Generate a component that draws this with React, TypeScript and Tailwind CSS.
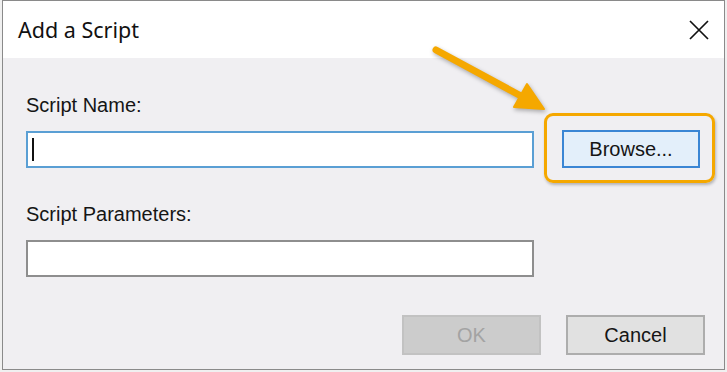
import React from 'react';

const label = "font-['Liberation_Sans',Arial,sans-serif] text-[20px] leading-[23px] text-[#151515]";

export default function App() {
  return (
    <div className="relative w-[727px] h-[372px] overflow-hidden bg-[#f0f0f0] pl-[2px]">
      {/* dialog window */}
      <div className="flex h-[370px] w-[723px] flex-col border border-[#8a8a8a]">
        {/* title bar */}
        <div className="flex h-[57px] shrink-0 items-center justify-between bg-white pl-[15px] pr-[15px]">
          <span className="font-['Noto_Sans',sans-serif] text-[21.5px] leading-none text-[#111]">Add a Script</span>
          <svg width="20" height="20" viewBox="0 0 20 20" className="text-[#111]">
            <path d="M1 1L19 19M19 1L1 19" stroke="currentColor" strokeWidth="1.7" fill="none" />
          </svg>
        </div>

        {/* body */}
        <div className="flex flex-1 flex-col bg-[#f0eff2] pl-[23px] pr-[19px] pt-[36px]">
          <div className={label}>Script Name:</div>
          <div className="mt-[13px] flex items-center">
            <div className="flex h-[37px] w-[508px] items-center border-2 border-[#5a9fd4] bg-white pl-[4px]">
              <span className="h-[23px] w-[2px] bg-[#111]" />
            </div>
            <div className="relative ml-[28px]">
              <button className={`flex h-[38px] w-[138px] items-center justify-center border-2 border-[#3a86d4] bg-[#e3effa] ${label}`}>
                Browse...
              </button>
              {/* highlight */}
              <span className="pointer-events-none absolute -bottom-[15px] -left-[18px] -right-[15px] -top-[17px] rounded-[9px] border-[3px] border-[#f5a800] shadow-[1px_2px_3px_rgba(0,0,0,0.25)]" />
            </div>
          </div>

          <div className={`mt-[35px] ${label}`}>Script Parameters:</div>
          <div className="mt-[14px] h-[37px] w-[508px] border-2 border-[#8e8e8e] bg-white" />

          <div className="mt-[38px] flex justify-end gap-[25px]">
            <button className={`flex h-[40px] w-[139px] items-center justify-center border-2 border-[#c2c2c2] bg-[#cccccc] ${label} !text-[#a3a3a3]`}>
              OK
            </button>
            <button className={`flex h-[40px] w-[139px] items-center justify-center border-2 border-[#adadad] bg-[#e1e1e1] ${label}`}>
              Cancel
            </button>
          </div>
        </div>
      </div>

      {/* annotation arrow */}
      <svg
        className="pointer-events-none absolute left-[425px] top-[40px] drop-shadow-[1px_2px_2px_rgba(0,0,0,0.3)]"
        width="130"
        height="80"
        viewBox="0 0 130 80"
      >
        <line x1="11" y1="10" x2="96" y2="56" stroke="#f5a800" strokeWidth="7" strokeLinecap="round" />
        <polygon points="119,69 89,67 102,44" fill="#f5a800" stroke="#f5a800" strokeWidth="2" strokeLinejoin="round" />
      </svg>
    </div>
  );
}
